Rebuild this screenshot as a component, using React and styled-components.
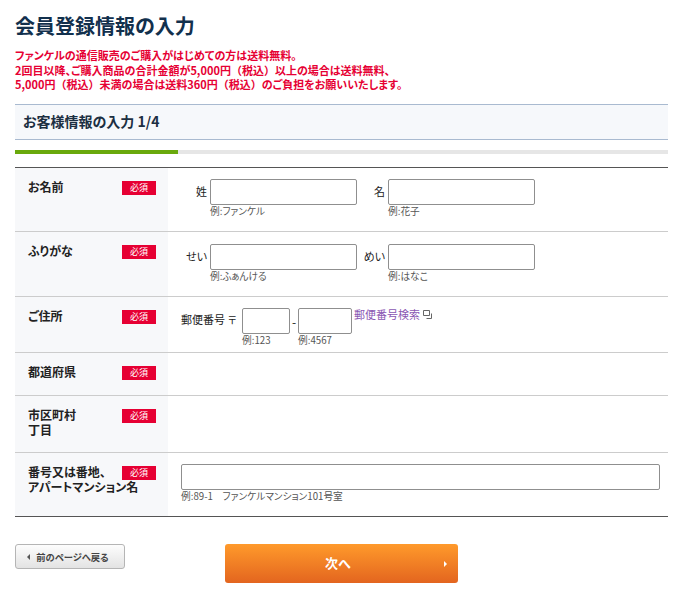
import React from "react";
import styled, { createGlobalStyle } from "styled-components";

const GlobalStyle = createGlobalStyle`
  html, body {
    margin: 0;
    background: #fff;
    overflow: hidden;
  }
  body {
    font-family: "Noto Sans CJK JP", "Noto Sans", sans-serif;
    font-feature-settings: "palt";
    color: #222;
  }
  * {
    box-sizing: border-box;
  }
`;

const App = () => {
  return (
    <Page>
      <GlobalStyle />
      <Title>会員登録情報の入力</Title>
      <Notice>
        ファンケルの通信販売のご購入がはじめての方は送料無料。
        <br />
        2回目以降、ご購入商品の合計金額が5,000円<Wide>（</Wide>税込<Wide>）</Wide>以上の場合は送料無料、
        <br />
        5,000円<Wide>（</Wide>税込<Wide>）</Wide>未満の場合は送料360円<Wide>（</Wide>税込<Wide>）</Wide>のご負担をお願いいたします。
      </Notice>
      <StepHeader>お客様情報の入力 1/4</StepHeader>
      <Progress>
        <ProgressFill style={{ width: `${(1 / 4) * 100}%` }} />
      </Progress>

      <Form>
        <Row height={64}>
          <LabelCell>
            <LabelText>お名前</LabelText>
            <Required>必須</Required>
          </LabelCell>
          <FieldCell>
            <FieldLine>
              <NamedField>
                <FieldName>姓</FieldName>
                <div>
                  <TextInput width={147} />
                  <Hint>例:ファンケル</Hint>
                </div>
              </NamedField>
              <NamedField>
                <FieldName>名</FieldName>
                <div>
                  <TextInput width={147} />
                  <Hint>例:花子</Hint>
                </div>
              </NamedField>
            </FieldLine>
          </FieldCell>
        </Row>

        <Row height={65}>
          <LabelCell>
            <LabelText>ふりがな</LabelText>
            <Required>必須</Required>
          </LabelCell>
          <FieldCell top={12}>
            <FieldLine>
              <NamedField>
                <FieldName>せい</FieldName>
                <div>
                  <TextInput width={147} />
                  <Hint>例:ふぁんける</Hint>
                </div>
              </NamedField>
              <NamedField>
                <FieldName>めい</FieldName>
                <div>
                  <TextInput width={147} />
                  <Hint>例:はなこ</Hint>
                </div>
              </NamedField>
            </FieldLine>
          </FieldCell>
        </Row>

        <Row height={56}>
          <LabelCell>
            <LabelText>ご住所</LabelText>
            <Required>必須</Required>
          </LabelCell>
          <FieldCell>
            <PostalLine>
              <PostalLabel>郵便番号</PostalLabel>
              <PostalMark>〒</PostalMark>
              <div>
                <TextInput width={48} />
                <Hint>例:123</Hint>
              </div>
              <Dash>-</Dash>
              <div>
                <TextInput width={54} />
                <Hint>例:4567</Hint>
              </div>
              <SearchLink href="#">
                郵便番号検索
                <svg width="9" height="9" viewBox="0 0 9 9" fill="none" stroke="#666" strokeWidth="1">
                  <path d="M6.5 5.5H.5V.5h6v5z" />
                  <path d="M3.5 8.5h5V3.5" />
                </svg>
              </SearchLink>
            </PostalLine>
          </FieldCell>
        </Row>

        <Row height={43}>
          <LabelCell>
            <LabelText>都道府県</LabelText>
            <Required>必須</Required>
          </LabelCell>
          <FieldCell />
        </Row>

        <Row height={57}>
          <LabelCell>
            <LabelText>
              市区町村
              <br />
              丁目
            </LabelText>
            <Required>必須</Required>
          </LabelCell>
          <FieldCell />
        </Row>

        <Row height={64} last>
          <LabelCell>
            <LabelText>
              番号又は番地、
              <br />
              アパートマンション名
            </LabelText>
            <Required>必須</Required>
          </LabelCell>
          <FieldCell>
            <TextInput width={479} />
            <Hint>例:89-1　ファンケルマンション101号室</Hint>
          </FieldCell>
        </Row>
      </Form>

      <Actions>
        <BackButton type="button">
          <BackArrow />
          前のページへ戻る
        </BackButton>
        <NextButton type="button">
          次へ
          <NextArrow />
        </NextButton>
      </Actions>
    </Page>
  );
};

const Page = styled.div`
  width: 694px;
  padding: 0 26px 0 15px;
`;

const Title = styled.h1`
  margin: 0;
  padding-top: 12px;
  height: 48px;
  font-size: 20px;
  line-height: 28px;
  font-weight: 700;
  color: #12304d;
`;

const Notice = styled.p`
  margin: 0;
  height: 56px;
  font-size: 11px;
  line-height: 14.5px;
  font-weight: 700;
  color: #e60033;
  white-space: nowrap;
`;

const Wide = styled.span`
  font-feature-settings: normal;
`;

const StepHeader = styled.h2`
  margin: 0;
  height: 36px;
  padding-left: 8px;
  border-top: 1px solid #a9bad0;
  border-bottom: 1px solid #a9bad0;
  background: #f6f8fb;
  font-size: 14px;
  line-height: 33px;
  font-weight: 700;
  color: #1c2f42;
`;

const Progress = styled.div`
  height: 4px;
  margin: 10px 0 13px;
  background: #e6e6e6;
`;

const ProgressFill = styled.div`
  height: 100%;
  background: #69a90c;
`;

const Form = styled.div`
  border-top: 1px solid #555;
`;

const Row = styled.div`
  display: grid;
  grid-template-columns: 153px 1fr;
  height: ${(props) => props.height}px;
  border-bottom: 1px solid ${(props) => (props.last ? "#555" : "#ccc")};
`;

const LabelCell = styled.div`
  display: flex;
  align-items: flex-start;
  justify-content: space-between;
  padding: 11px 12px 0 13px;
  background: #f7f8fa;
`;

const LabelText = styled.div`
  flex: 0 0 94px;
  min-width: 0;
  font-size: 12px;
  line-height: 15px;
  font-weight: 700;
  color: #222;
  white-space: nowrap;
`;

const Required = styled.span`
  flex: none;
  position: relative;
  width: 34px;
  height: 14px;
  margin-top: 2px;
  background: #e60033;
  color: #fff;
  font-size: 9px;
  line-height: 14px;
  text-align: center;
`;

const FieldCell = styled.div`
  padding: ${(props) => props.top || 11}px 13px 0;
`;

const FieldLine = styled.div`
  display: flex;
  gap: 2px;
`;

const NamedField = styled.div`
  display: grid;
  grid-template-columns: 29px auto;
`;

const FieldName = styled.span`
  padding: 4px 3px 0 0;
  font-size: 11px;
  line-height: 16px;
  text-align: right;
  white-space: nowrap;
`;

const TextInput = styled.input`
  display: block;
  width: ${(props) => props.width}px;
  height: 26px;
  padding: 0 4px;
  border: 1px solid #8f8f8f;
  border-radius: 2px;
  background: #fff;
`;

const Hint = styled.div`
  font-size: 9.7px;
  line-height: 12px;
  color: #555;
  white-space: nowrap;
`;

const PostalLine = styled.div`
  display: flex;
  align-items: flex-start;
`;

const PostalLabel = styled.span`
  width: 47px;
  padding-top: 4px;
  font-size: 11px;
  line-height: 15px;
  white-space: nowrap;
`;

const PostalMark = styled.span`
  width: 14px;
  padding-top: 4px;
  font-size: 10px;
  line-height: 15px;
`;

const Dash = styled.span`
  width: 8px;
  padding-top: 6px;
  font-size: 12px;
  line-height: 15px;
  text-align: center;
`;

const SearchLink = styled.a`
  display: flex;
  align-items: center;
  gap: 3px;
  margin-left: 2px;
  font-size: 11px;
  line-height: 13px;
  color: #8a57b3;
  text-decoration: none;
  white-space: nowrap;
`;

const Actions = styled.div`
  display: flex;
  align-items: flex-start;
  gap: 100px;
  padding-top: 27px;
`;

const BackButton = styled.button`
  display: flex;
  align-items: center;
  justify-content: center;
  gap: 6px;
  width: 110px;
  height: 25px;
  padding: 0 4px 0 0;
  border: 1px solid #b5b5b5;
  border-radius: 3px;
  background: linear-gradient(#fdfdfd, #e3e3e3);
  font-family: inherit;
  font-feature-settings: inherit;
  font-size: 9.3px;
  font-weight: 700;
  color: #444;
`;

const BackArrow = styled.span`
  width: 0;
  height: 0;
  border-top: 3px solid transparent;
  border-bottom: 3px solid transparent;
  border-right: 3px solid #555;
`;

const NextButton = styled.button`
  position: relative;
  width: 233px;
  height: 39px;
  padding: 0 7px 2px 0;
  border: none;
  border-radius: 3px;
  background: linear-gradient(#ff9a2b, #e3651f);
  font-family: inherit;
  font-size: 13px;
  font-weight: 700;
  color: #fff;
`;

const NextArrow = styled.span`
  position: absolute;
  top: 17px;
  right: 11px;
  width: 0;
  height: 0;
  border-top: 3px solid transparent;
  border-bottom: 3px solid transparent;
  border-left: 3px solid #fff;
`;

export default App;
